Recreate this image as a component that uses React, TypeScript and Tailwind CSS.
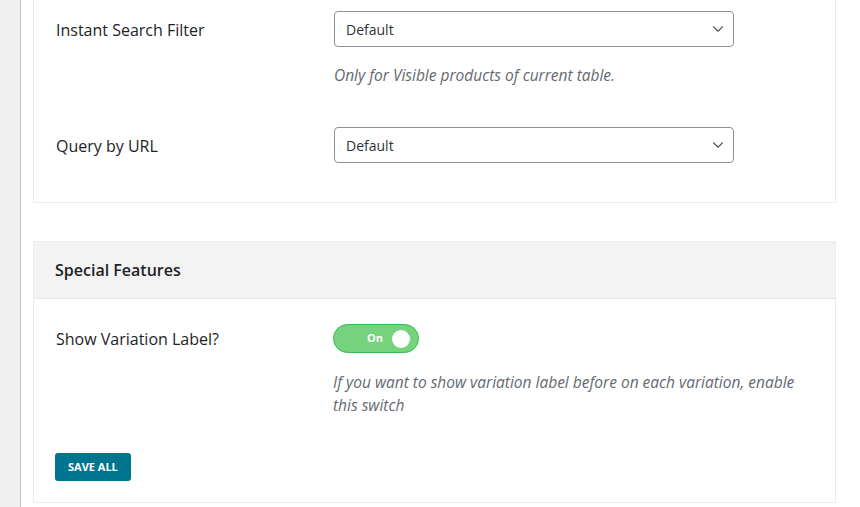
import { ChevronDown } from 'lucide-react';

const font = { fontFamily: '"Segoe UI", "Open Sans", "Noto Sans", sans-serif' };

const SelectBox = ({ value }: { value: string }) => (
  <div className="flex h-[36px] w-[400px] items-center justify-between rounded-[4px] border border-[#8c8f94] bg-white pl-[11px] pr-[6px] text-[14px] text-[#2c3338]">
    <span>{value}</span>
    <ChevronDown size={18} strokeWidth={1.5} className="text-[#50575e]" />
  </div>
);

const Toggle = () => (
  <div className="flex h-[29px] w-[86px] items-center justify-end gap-[9px] rounded-full border border-[#3cb94a] bg-[#74d37c] pr-[8px]">
    <span className="text-[11px] font-bold text-white">On</span>
    <span className="h-[18px] w-[18px] rounded-full bg-white" />
  </div>
);

export default function App() {
  return (
    <div className="flex h-[507px] w-full overflow-hidden bg-[#f0f0f1]" style={font}>
      <div className="w-[20px] shrink-0" />
      <div className="flex-1 border-l border-[#c3c4c7] bg-white pl-[12px] pr-[24px]">
        {/* General options card (continues above) */}
        <div className="border-x border-b border-[#ececec] pt-[11px] pb-[38px] pl-[22px]">
          <div className="flex">
            <div className="flex h-[37px] w-[278px] items-center text-[16px] text-[#1d2327]">Instant Search Filter</div>
            <div>
              <SelectBox value="Default" />
              <p className="mt-[17px] text-[15.5px] italic leading-[22px] text-[#646970]">Only for Visible products of current table.</p>
            </div>
          </div>
          <div className="mt-[41px] flex">
            <div className="flex h-[37px] w-[278px] items-center text-[16px] text-[#1d2327]">Query by URL</div>
            <SelectBox value="Default" />
          </div>
        </div>

        {/* Special Features card */}
        <div className="mt-[38px] border border-[#ececec]">
          <div className="flex h-[57px] items-center border-b border-[#e6e6e6] bg-[#f3f3f3] pl-[21px] text-[16px] font-semibold text-[#1d2327]">
            Special Features
          </div>
          <div className="pt-[25px] pb-[21px] pl-[21px]">
            <div className="flex">
              <div className="flex h-[29px] w-[278px] items-center pl-[1px] text-[16px] text-[#1d2327]">Show Variation Label?</div>
              <div className="flex-1 pr-[20px]">
                <Toggle />
                <p className="mt-[18px] max-w-[480px] text-[15.5px] italic leading-[23px] text-[#646970]">
                  If you want to show variation label before on each variation, enable this switch
                </p>
              </div>
            </div>
            <button className="mt-[36px] h-[28px] rounded-[3px] bg-[#00758f] px-[13px] text-[11px] font-bold uppercase text-white">
              Save All
            </button>
          </div>
        </div>
      </div>
    </div>
  );
}
